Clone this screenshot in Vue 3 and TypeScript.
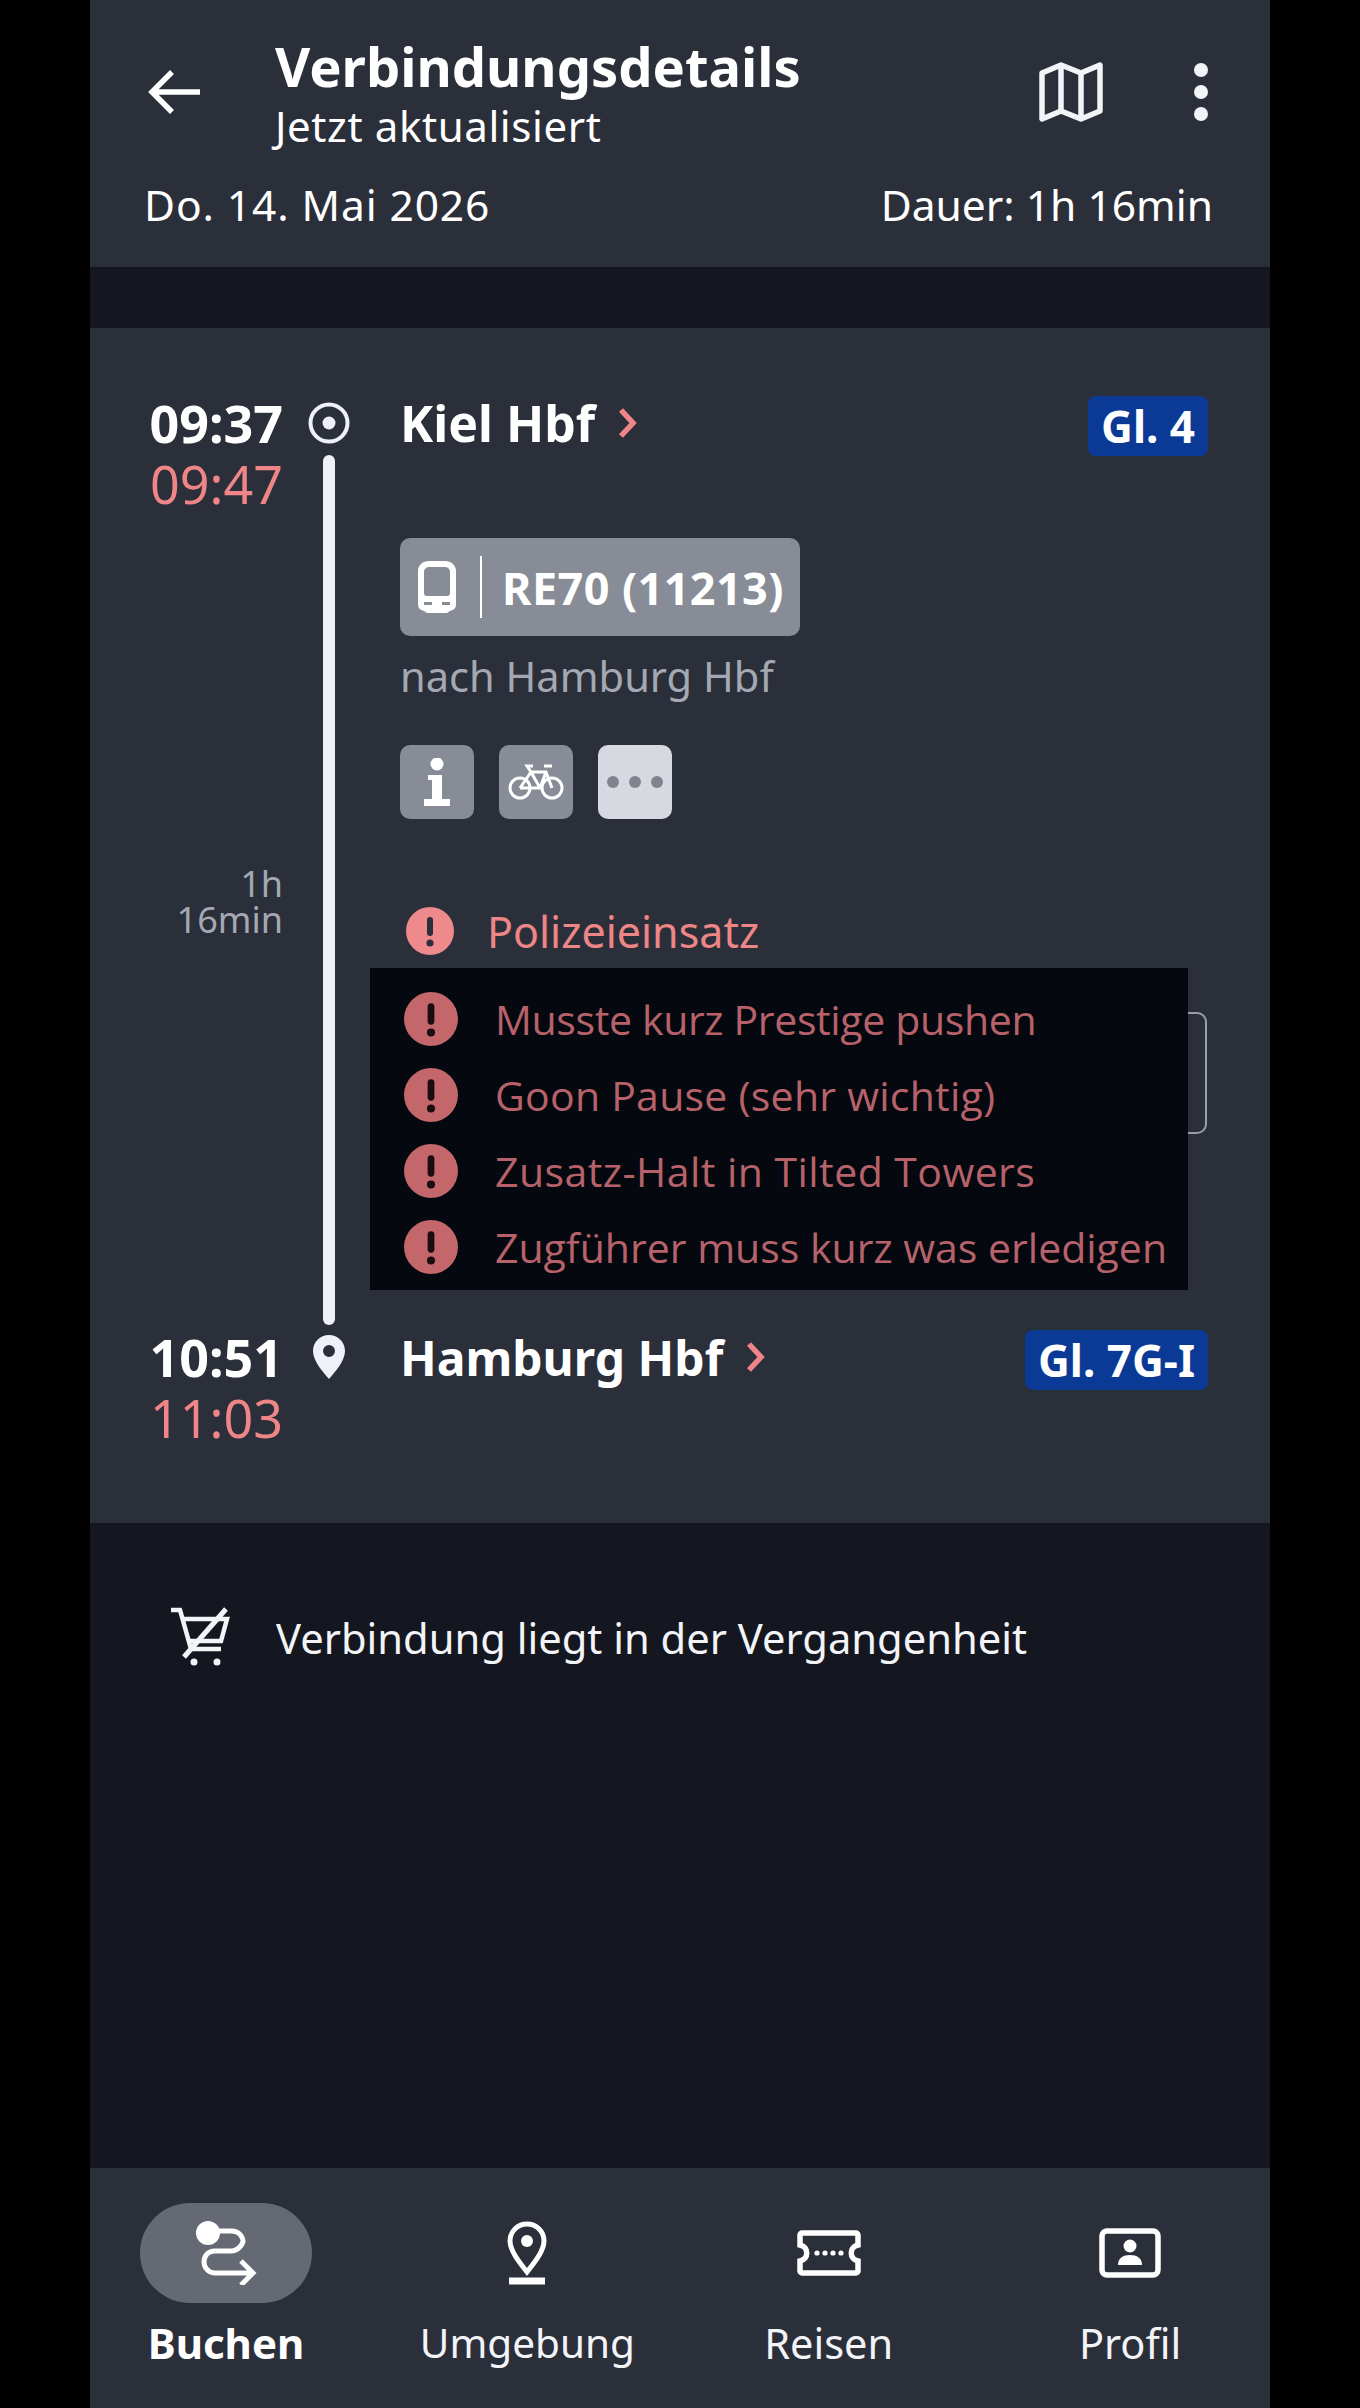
<script setup lang="ts">
const alerts: string[] = [
  'Musste kurz Prestige pushen',
  'Goon Pause (sehr wichtig)',
  'Zusatz-Halt in Tilted Towers',
  'Zugführer muss kurz was erledigen',
]
</script>

<template>
  <div class="phone">
    <header class="head">
      <div class="head-top">
        <svg class="back" width="54" height="46" viewBox="0 0 54 46" fill="none" stroke="#fff" stroke-width="5.5">
          <path d="M52 23H5M24 3 4 23l20 20" />
        </svg>
        <div class="titles">
          <div class="title">Verbindungsdetails</div>
          <div class="sub">Jetzt aktualisiert</div>
        </div>
        <svg class="map" width="64" height="60" viewBox="0 0 64 60" fill="none" stroke="#f2f4f8" stroke-width="5.5" stroke-linejoin="round">
          <path d="M3 11 22 3l20 8 19-8v46l-19 8-20-8-19 8z" />
          <path d="M22 3v46M42 11v46" />
        </svg>
        <div class="kebab"><i></i><i></i><i></i></div>
      </div>
      <div class="head-meta">
        <span class="date">Do. 14. Mai 2026</span>
        <span>Dauer: 1h 16min</span>
      </div>
    </header>

    <section class="card">
      <div class="stop">
        <div class="time bold">09:37</div>
        <div class="rail-icon">
          <svg width="42" height="42" viewBox="0 0 42 42">
            <circle cx="21" cy="21" r="18.5" fill="none" stroke="#eef1f7" stroke-width="4" />
            <circle cx="21" cy="21" r="6.5" fill="#eef1f7" />
          </svg>
        </div>
        <div class="station kiel">Kiel Hbf</div>
        <svg class="chev" width="20" height="32" viewBox="0 0 20 32" fill="none" stroke="#ee8586" stroke-width="5.5">
          <path d="M4 3l12 13L4 29" />
        </svg>
        <div class="gleis">Gl. 4</div>
      </div>

      <div class="leg">
        <div class="leg-left">
          <div class="time late">09:47</div>
          <div class="dur">1h<br />16min</div>
        </div>
        <div class="rail"><div class="line"></div></div>
        <div class="leg-main">
          <div class="train">
            <svg width="38" height="52" viewBox="0 0 38 52">
              <path fill="#fff" fill-rule="evenodd" d="M11 0h16c6 0 11 4 11 10v33c0 4-2 6-6 7l-3 2H9l-3-2c-4-1-6-3-6-7V10C0 4 5 0 11 0zm1 6C8 6 6 8 6 11v21c0 2 1 3 3 3h20c2 0 3-1 3-3V11c0-3-2-5-6-5zM6 41v3h8v-3zm18 0v3h8v-3z" />
            </svg>
            <span class="train-sep"></span>
            <span class="train-name">RE70 (11213)</span>
          </div>
          <div class="dest">nach Hamburg Hbf</div>
          <div class="tiles">
            <div class="tile">
              <svg width="28" height="48" viewBox="0 0 28 48">
                <circle cx="14" cy="6" r="6.5" fill="#fff" />
                <path fill="#fff" d="M5 17h14v24h8v7H1v-7h8V22H5z" />
              </svg>
            </div>
            <div class="tile">
              <svg width="56" height="38" viewBox="0 0 56 38" fill="none" stroke="#fff" stroke-width="3">
                <circle cx="12" cy="25" r="10" />
                <circle cx="44" cy="25" r="10" />
                <path d="M12 25 23 9h15l6 16M23 9l9 16H12M38 9 32 25M25 3h-6l4 6M36 3h8" />
              </svg>
            </div>
            <div class="tile light"><i></i><i></i><i></i></div>
          </div>
          <div class="alert-main">
            <svg width="48" height="48" viewBox="0 0 48 48">
              <circle cx="24" cy="24" r="24" fill="#ef8a8c" />
              <rect x="21" y="10" width="6" height="19" rx="3" fill="#2b2f3b" />
              <circle cx="24" cy="36" r="3.6" fill="#2b2f3b" />
            </svg>
            <span>Polizeieinsatz</span>
          </div>
          <div class="outline"></div>
          <div class="overlay">
            <div v-for="a in alerts" :key="a" class="ov-row">
              <svg width="54" height="54" viewBox="0 0 48 48">
                <circle cx="24" cy="24" r="24" fill="#c4676b" />
                <rect x="21" y="10" width="6" height="19" rx="3" fill="#1a0c10" />
                <circle cx="24" cy="36" r="3.6" fill="#1a0c10" />
              </svg>
              <span>{{ a }}</span>
            </div>
          </div>
        </div>
      </div>

      <div class="stop">
        <div class="time bold">10:51</div>
        <div class="rail-icon">
          <svg width="34" height="44" viewBox="0 0 34 44">
            <path fill="#eef1f7" fill-rule="evenodd" d="M17 0c9 0 16 7 16 16 0 10-10 21-16 28C11 37 1 26 1 16 1 7 8 0 17 0zm0 10a6 6 0 1 0 0 12 6 6 0 0 0 0-12z" />
          </svg>
        </div>
        <div class="station hbg">Hamburg Hbf</div>
        <svg class="chev" width="20" height="32" viewBox="0 0 20 32" fill="none" stroke="#ee8586" stroke-width="5.5">
          <path d="M4 3l12 13L4 29" />
        </svg>
        <div class="gleis">Gl. 7G-I</div>
      </div>
      <div class="time late">11:03</div>
    </section>

    <main class="rest">
      <div class="past">
        <svg width="62" height="62" viewBox="0 0 62 62" fill="none" stroke="#f2f4f8" stroke-width="4.5">
          <path d="M1 3h9l11 39h30" />
          <path d="M12 12h45l-6 22H20" />
          <path d="M56 2 14 50" stroke-width="5" />
          <circle cx="24" cy="55" r="3.5" fill="#f2f4f8" stroke="none" />
          <circle cx="47" cy="55" r="3.5" fill="#f2f4f8" stroke="none" />
        </svg>
        <span>Verbindung liegt in der Vergangenheit</span>
      </div>
    </main>

    <nav class="nav">
      <div class="nav-item">
        <div class="nav-icon active">
          <svg width="62" height="64" viewBox="0 0 62 64" fill="none" stroke="#fff" stroke-width="5">
            <circle cx="13" cy="12" r="12" fill="#fff" stroke="none" />
            <path d="M14 10h22c10 0 12 8 12 10s-4 10-12 10H20c-8 0-11 6-11 11s4 11 11 11h36M46 40l12 12-12 12" />
          </svg>
        </div>
        <div class="nav-label strong">Buchen</div>
      </div>
      <div class="nav-item">
        <div class="nav-icon">
          <svg width="40" height="64" viewBox="0 0 40 64" fill="none" stroke="#fff" stroke-width="5">
            <path d="M20 3c9 0 17 7 17 17 0 10-10 22-17 31C13 42 3 30 3 20 3 10 11 3 20 3z" />
            <circle cx="20" cy="20" r="6" fill="#fff" stroke="none" />
            <path d="M2 60h36" stroke-width="7" />
          </svg>
        </div>
        <div class="nav-label narrow">Umgebung</div>
      </div>
      <div class="nav-item">
        <div class="nav-icon">
          <svg width="64" height="46" viewBox="0 0 64 46" fill="none" stroke="#fff" stroke-width="5.5">
            <path d="M3 5c0-1 1-2 2-2h54c1 0 2 1 2 2v10c-9 2-9 14 0 16v10c0 1-1 2-2 2H5c-1 0-2-1-2-2V31c9-2 9-14 0-16z" />
            <g fill="#fff" stroke="none">
              <circle cx="20" cy="23" r="2.6" /><circle cx="28" cy="23" r="2.6" /><circle cx="36" cy="23" r="2.6" /><circle cx="44" cy="23" r="2.6" />
            </g>
          </svg>
        </div>
        <div class="nav-label">Reisen</div>
      </div>
      <div class="nav-item">
        <div class="nav-icon">
          <svg width="62" height="50" viewBox="0 0 62 50" fill="none" stroke="#fff" stroke-width="5.5">
            <rect x="3" y="3" width="56" height="44" rx="5" />
            <circle cx="31" cy="18" r="6.5" fill="#fff" stroke="none" />
            <path d="M19 37c0-7 5-10 12-10s12 3 12 10z" fill="#fff" stroke="none" />
          </svg>
        </div>
        <div class="nav-label">Profil</div>
      </div>
    </nav>
  </div>
</template>

<style>
html, body { background: #000; margin: 0; }
</style>

<style scoped>
.phone {
  width: 1180px;
  height: 2408px;
  margin: 0 auto;
  background: #14171f;
  color: #fff;
  display: flex;
  flex-direction: column;
  font-family: "Noto Sans", sans-serif;
}
.head {
  height: 267px;
  box-sizing: border-box;
  background: #2b2f3a;
  padding-top: 36px;
}
.head-top { display: flex; align-items: flex-start; height: 120px; }
.back { margin: 33px 0 0 58px; flex: none; }
.titles { margin-left: 73px; flex: 1; }
.title { font-size: 54.3px; font-weight: 700; line-height: 60px; }
.sub { font-size: 42px; letter-spacing: 0.6px; line-height: 50px; margin-top: 5px; }
.map { margin: 26px 0 0; flex: none; }
.kebab { width: 14px; margin: 27px 62px 0 91px; display: flex; flex-direction: column; gap: 8px; }
.kebab i { width: 14px; height: 14px; border-radius: 50%; background: #f2f4f8; display: block; }
.head-meta {
  display: flex;
  justify-content: space-between;
  padding: 0 57px 0 54px;
  font-size: 42.5px;
  line-height: 50px;
  margin-top: 24px;
}
.date { letter-spacing: 0.9px; }
.card {
  margin-top: 61px;
  height: 1195px;
  box-sizing: border-box;
  background: #2b2f3a;
  padding: 63px 62px 0 0;
}
.stop { display: flex; align-items: center; height: 64px; }
.time { width: 193px; text-align: right; font-size: 52px; line-height: 62px; flex: none; }
.bold { font-weight: 700; }
.time.late { color: #ee8586; font-weight: 400; line-height: 58px; }
.rail-icon { width: 92px; display: flex; justify-content: center; flex: none; }
.station { margin-left: 25px; font-weight: 700; white-space: nowrap; }
.station.kiel { font-size: 50px; }
.station.hbg { font-size: 48px; }
.chev { margin-left: 22px; flex: none; }
.gleis {
  margin: 5px 0 0 auto;
  height: 60px;
  padding: 0 13px;
  border-radius: 8px;
  background: #0b3a96;
  font-size: 44px;
  font-weight: 700;
  line-height: 60px;
  white-space: nowrap;
}
.leg { display: flex; height: 870px; }
.leg-left { width: 193px; flex: none; }
.dur {
  margin-top: 353px;
  text-align: right;
  font-size: 36px;
  line-height: 36px;
  color: #a4a8b3;
}
.rail { width: 92px; flex: none; display: flex; justify-content: center; }
.line { width: 12px; height: 100%; border-radius: 6px; background: #eef1f7; }
.leg-main { flex: 1; margin-left: 25px; padding-top: 83px; position: relative; }
.train {
  display: inline-flex;
  align-items: center;
  height: 98px;
  width: 400px;
  box-sizing: border-box;
  padding-left: 18px;
  background: #878c96;
  border-radius: 10px;
}
.train-sep { width: 2px; height: 62px; background: #fff; margin: 0 20px 0 24px; }
.train-name { font-size: 45px; letter-spacing: 0.4px; font-weight: 700; white-space: nowrap; }
.dest { font-size: 41.6px; line-height: 50px; color: #a4a8b3; margin-top: 15px; }
.tiles { display: flex; gap: 25px; margin-top: 44px; }
.tile {
  width: 74px;
  height: 74px;
  border-radius: 10px;
  background: #878c96;
  display: flex;
  align-items: center;
  justify-content: center;
}
.tile.light { background: #d6d9e0; gap: 10px; }
.tile.light i { width: 12px; height: 12px; border-radius: 50%; background: #7f848e; display: block; }
.alert-main { display: flex; align-items: center; gap: 33px; margin: 88px 0 0 6px; height: 48px; color: #ee8586; font-size: 43px; }
.outline {
  position: absolute;
  left: 601px;
  top: 557px;
  width: 206px;
  height: 122px;
  box-sizing: border-box;
  border: 2px solid #9a9ea8;
  border-radius: 10px;
}
.overlay {
  position: absolute;
  left: -30px;
  top: 513px;
  width: 818px;
  height: 322px;
  box-sizing: border-box;
  padding-top: 13px;
  background: #05090f;
  font-family: "Open Sans", sans-serif;
  color: #b7626a;
  font-size: 41px;
}
.ov-row { display: flex; align-items: center; height: 76px; padding-left: 34px; gap: 37px; white-space: nowrap; }
.ov-row svg { flex: none; }
.ov-row:nth-child(1) span { letter-spacing: -0.35px; }
.ov-row:nth-child(2) span { letter-spacing: 0.25px; }
.ov-row:nth-child(3) span { letter-spacing: 0.45px; }
.rest { flex: 1; }
.past { display: flex; align-items: center; padding: 84px 0 0 80px; gap: 44px; font-size: 41.7px; line-height: 62px; color: #f2f4f8; }
.past svg { flex: none; }
.nav {
  height: 240px;
  box-sizing: border-box;
  background: #2b2f3a;
  padding: 35px 54px 0 50px;
  display: flex;
  justify-content: space-between;
}
.nav-item { width: 172px; display: flex; flex-direction: column; align-items: center; }
.nav-icon { width: 172px; height: 100px; display: flex; align-items: center; justify-content: center; border-radius: 50px; flex: none; }
.nav-icon.active { background: #646973; }
.nav-label { margin-top: 15px; font-size: 41.5px; line-height: 50px; white-space: nowrap; color: #f2f4f8; }
.nav-label.narrow { font-size: 40.5px; }
.nav-label.strong { font-weight: 700; color: #fff; font-size: 42px; }
</style>
